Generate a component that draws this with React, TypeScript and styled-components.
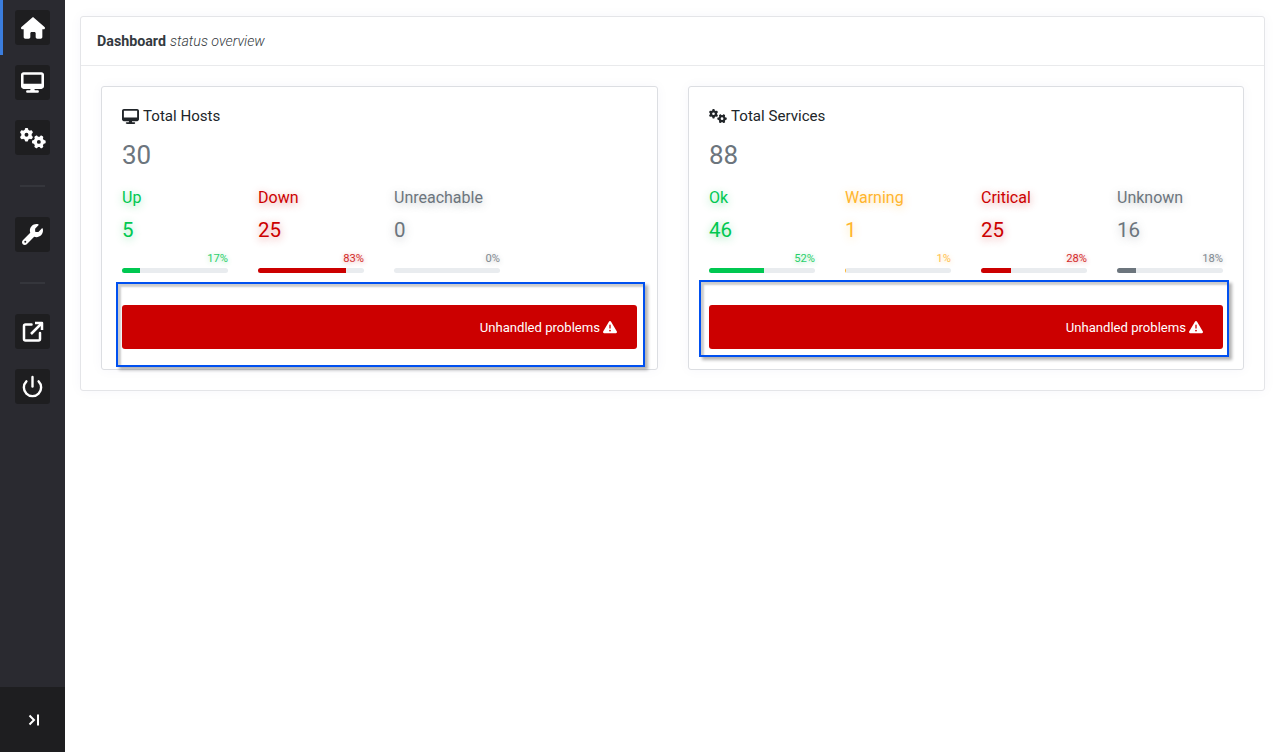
import React from "react";
import styled, { createGlobalStyle } from "styled-components";
import { FiPower } from "react-icons/fi";
import {
  FaHouse,
  FaDesktop,
  FaGears,
  FaWrench,
  FaTriangleExclamation,
} from "react-icons/fa6";

const Global = createGlobalStyle`
  html, body { margin: 0; padding: 0; background: #fff; height: 100%; }
  #root { height: 100%; }
  * { box-sizing: border-box; }
`;

const Page = styled.div`
  display: flex;
  height: 752px;
  font-family: Roboto, "Liberation Sans", sans-serif;
  color: #212529;
`;

const Sidebar = styled.nav`
  width: 65px;
  flex: none;
  background: #2a2a30;
  display: flex;
  flex-direction: column;
`;

const NavList = styled.div`
  flex: 1;
  display: flex;
  flex-direction: column;
`;

const NavItem = styled.div<{ $active?: boolean }>`
  height: 55px;
  padding: 10px 15px;
  box-shadow: ${(p) => (p.$active ? "inset 3px 0 0 #3b7ddd" : "none")};
`;

const NavButton = styled.div`
  width: 35px;
  height: 35px;
  background: #1e1e20;
  border-radius: 3px;
  color: #fff;
  display: flex;
  align-items: center;
  justify-content: center;
`;

const NavDivider = styled.div`
  height: 2px;
  width: 25px;
  margin: 20px 20px;
  background: #35363c;
`;

const Collapse = styled.div`
  height: 65px;
  background: #1e1e20;
  color: #fff;
  display: flex;
  align-items: center;
  justify-content: center;
  padding-left: 3px;
`;

const Main = styled.main`
  flex: 1;
  padding: 16px 15px 0;
  min-width: 0;
`;

const Panel = styled.section`
  background: #fff;
  border: 1px solid #e4e5e8;
  border-radius: 3px;
  box-shadow: 0 0 13px rgba(26, 54, 126, 0.04);
`;

const PanelHeader = styled.header`
  height: 49px;
  padding: 0 16px;
  display: flex;
  align-items: center;
  gap: 4px;
  font-size: 14.25px;
  border-bottom: 1px solid #e9eaec;
  color: #495057;
`;

const PanelTitle = styled.strong`
  font-weight: 700;
  color: #343a40;
`;

const PanelSubtitle = styled.em`
  font-weight: 300;
  font-style: italic;
  color: #343a40;
`;

const PanelBody = styled.div`
  padding: 20px;
  display: grid;
  grid-template-columns: 557px 556px;
  gap: 30px;
`;

const Card = styled.article`
  height: 284px;
  background: #fff;
  border: 1px solid #dcdee2;
  border-radius: 3px;
  padding: 20px;
  box-shadow: 0 0 13px rgba(26, 54, 126, 0.04);
`;

const CardTitle = styled.h3`
  margin: 0;
  height: 18px;
  display: flex;
  align-items: center;
  gap: 4px;
  font-size: 15.1px;
  line-height: 18px;
  font-weight: 400;
  color: #212529;
`;

const Total = styled.div`
  margin-top: 14px;
  font-size: 26px;
  line-height: 32px;
  color: #6c757d;
`;

const StatGrid = styled.div`
  margin-top: 17px;
  display: grid;
  grid-template-columns: repeat(4, 106px);
  column-gap: 30px;
`;

const Stat = styled.div<{ $color: string }>`
  color: ${(p) => p.$color};
`;

const StatLabel = styled.div<{ $glow: string }>`
  font-size: 16px;
  line-height: 20px;
  text-shadow: 0 2px 8px ${(p) => p.$glow};
`;

const StatValue = styled.div<{ $glow: string }>`
  margin-top: 10px;
  font-size: 20.5px;
  line-height: 25px;
  text-shadow: 0 2px 8px ${(p) => p.$glow};
`;

const StatPercent = styled.div<{ $glow: string }>`
  margin-top: 9px;
  text-align: right;
  font-size: 11.2px;
  line-height: 13px;
  opacity: 0.85;
  text-shadow: 0 1px 5px ${(p) => p.$glow};
`;

const Track = styled.div`
  margin-top: 3px;
  height: 5px;
  border-radius: 3px;
  background: #e9ecef;
  overflow: hidden;
`;

const Fill = styled.div<{ $color: string }>`
  height: 100%;
  background: ${(p) => p.$color};
`;

const Problems = styled.div`
  position: relative;
  margin-top: 32px;
  height: 44px;
  background: #cc0000;
  border-radius: 3px;
  color: #fff;
  font-size: 13.1px;
  display: flex;
  align-items: center;
  justify-content: flex-end;
  gap: 3px;
  padding-right: 20px;
`;

const Highlight = styled.div<{ $top: number; $left: number; $right: number; $bottom: number }>`
  position: absolute;
  top: ${(p) => p.$top}px;
  left: ${(p) => p.$left}px;
  right: ${(p) => p.$right}px;
  bottom: ${(p) => p.$bottom}px;
  border: 2px solid #0050f0;
  box-shadow: 3px 3px 3px rgba(0, 0, 0, 0.3), inset 3px 3px 2px rgba(0, 0, 0, 0.2);
  pointer-events: none;
`;

const RED = "#cc0000";
const GREEN = "#00c851";
const AMBER = "#ffb52e";
const GREY = "#6c757d";

type S = { label: string; value: number; pct: number; color: string; glow: string };

const hosts: S[] = [
  { label: "Up", value: 5, pct: 17, color: GREEN, glow: "rgba(0,200,81,.45)" },
  { label: "Down", value: 25, pct: 83, color: RED, glow: "rgba(204,0,0,.45)" },
  { label: "Unreachable", value: 0, pct: 0, color: GREY, glow: "rgba(108,117,125,.45)" },
];
const services: S[] = [
  { label: "Ok", value: 46, pct: 52, color: GREEN, glow: "rgba(0,200,81,.45)" },
  { label: "Warning", value: 1, pct: 1, color: AMBER, glow: "rgba(255,181,46,.45)" },
  { label: "Critical", value: 25, pct: 28, color: RED, glow: "rgba(204,0,0,.45)" },
  { label: "Unknown", value: 16, pct: 18, color: GREY, glow: "rgba(108,117,125,.45)" },
];

const ExternalIcon = () => (
  <svg width="22" height="22" viewBox="0 0 22 22" fill="none" stroke="currentColor" strokeWidth="2.5" strokeLinejoin="round">
    <path d="M9.5 3.5H3.5a1.5 1.5 0 0 0-1.5 1.5v13a1.5 1.5 0 0 0 1.5 1.5h13a1.5 1.5 0 0 0 1.5-1.5V12" strokeLinecap="round" />
    <path d="M9 13L20 2" />
    <path d="M13 2H20V9" />
  </svg>
);

const CollapseIcon = () => (
  <svg width="12" height="12" viewBox="0 0 12 12" fill="none" stroke="currentColor" strokeWidth="2">
    <path d="M1.5 1.5L6 6L1.5 10.5" />
    <path d="M10 0.5V11.5" />
  </svg>
);

const StatBlock = ({ s }: { s: S }) => (
  <Stat $color={s.color}>
    <StatLabel $glow={s.glow}>{s.label}</StatLabel>
    <StatValue $glow={s.glow}>{s.value}</StatValue>
    <StatPercent $glow={s.glow}>{s.pct}%</StatPercent>
    <Track>
      <Fill $color={s.color} style={{ width: `${s.pct}%` }} />
    </Track>
  </Stat>
);

export default function App() {
  return (
    <Page>
      <Global />
      <Sidebar>
        <NavList>
          <NavItem $active><NavButton><FaHouse size={24} /></NavButton></NavItem>
          <NavItem><NavButton><FaDesktop size={23} /></NavButton></NavItem>
          <NavItem><NavButton><FaGears size={26} /></NavButton></NavItem>
          <NavDivider />
          <NavItem><NavButton><FaWrench size={21} /></NavButton></NavItem>
          <NavDivider />
          <NavItem><NavButton><ExternalIcon /></NavButton></NavItem>
          <NavItem><NavButton><FiPower size={23} strokeWidth={2.5} /></NavButton></NavItem>
        </NavList>
        <Collapse><CollapseIcon /></Collapse>
      </Sidebar>
      <Main>
        <Panel>
          <PanelHeader>
            <PanelTitle>Dashboard</PanelTitle>
            <PanelSubtitle>status overview</PanelSubtitle>
          </PanelHeader>
          <PanelBody>
            <Card>
              <CardTitle><FaDesktop size={17} />Total Hosts</CardTitle>
              <Total>30</Total>
              <StatGrid>
                {hosts.map((s) => <StatBlock key={s.label} s={s} />)}
              </StatGrid>
              <Problems>
                Unhandled problems <FaTriangleExclamation size={14} />
                <Highlight $top={-23} $left={-6} $right={-8} $bottom={-18} />
              </Problems>
            </Card>
            <Card>
              <CardTitle><FaGears size={18} />Total Services</CardTitle>
              <Total>88</Total>
              <StatGrid>
                {services.map((s) => <StatBlock key={s.label} s={s} />)}
              </StatGrid>
              <Problems>
                Unhandled problems <FaTriangleExclamation size={14} />
                <Highlight $top={-25} $left={-10} $right={-6} $bottom={-8} />
              </Problems>
            </Card>
          </PanelBody>
        </Panel>
      </Main>
    </Page>
  );
}
